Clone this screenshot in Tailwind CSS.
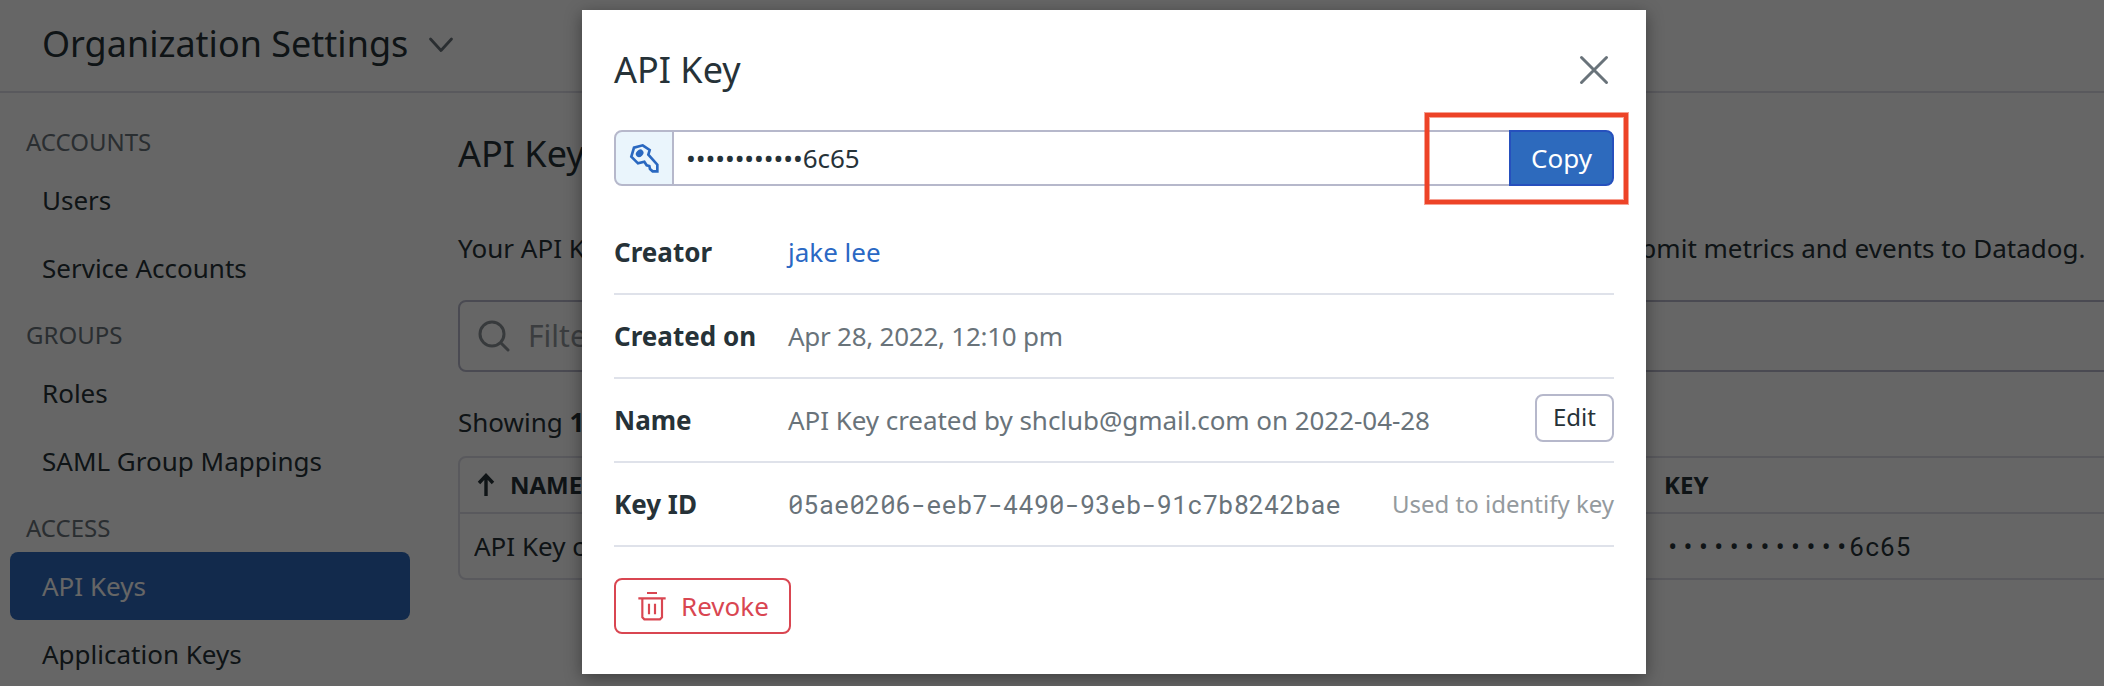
<!DOCTYPE html>
<html lang="en">
<head>
<meta charset="utf-8">
<title>API Keys</title>
<script src="https://cdn.jsdelivr.net/npm/@tailwindcss/browser@4"></script>
</head>
<body class="relative h-[686px] w-[2104px] overflow-hidden bg-white font-['Noto_Sans',sans-serif] text-[26px] leading-9 whitespace-nowrap text-[#263238]">
  <div class="flex h-full flex-col">
    <header class="flex h-[93px] shrink-0 items-center gap-5 border-b-2 border-[#dedfe9] pb-[3px] pl-[42px]">
      <h1 class="text-[36px]">Organization Settings</h1>
      <svg class="mt-[2px] h-[16px] w-[26px]" viewBox="0 0 26 16" fill="none" stroke="#69737a" stroke-width="2.8" stroke-linecap="round" stroke-linejoin="round"><path d="M2.500 2l10.500 11.500L23.500 2"/></svg>
    </header>
    <div class="flex flex-1">
      <nav class="w-[410px] shrink-0 pt-4 pl-[10px]">
        <div class="flex h-[57px] items-center pt-2 pl-4 text-2xl text-[#69737a]">ACCOUNTS</div>
        <a class="flex h-[68px] items-center pl-8">Users</a>
        <a class="flex h-[68px] items-center pl-8">Service Accounts</a>
        <div class="flex h-[57px] items-center pt-2 pl-4 text-2xl text-[#69737a]">GROUPS</div>
        <a class="flex h-[68px] items-center pl-8">Roles</a>
        <a class="flex h-[68px] items-center pl-8">SAML Group Mappings</a>
        <div class="flex h-[57px] items-center pt-2 pl-4 text-2xl text-[#69737a]">ACCESS</div>
        <a class="flex h-[68px] items-center rounded-lg bg-[#2d6abd] pl-8 text-white">API Keys</a>
        <a class="flex h-[68px] items-center pl-8">Application Keys</a>
      </nav>
      <main class="min-w-0 flex-1 pt-[37px] pl-12">
        <h2 class="text-[36px] leading-[48px]">API Keys</h2>
        <p class="mt-[52px] h-9 tracking-[0.012px]">Your API Keys are unique to your organization. An API key is required by the Datadog Agent to submit metrics and events to Datadog.</p>
        <div class="mt-[34px] flex h-[72px] w-[1700px] items-center gap-5 rounded-lg border-2 border-[#b8bacd] pl-[18px] text-[30px] text-[#949a9e]">
          <svg class="size-8" viewBox="0 0 32 32" fill="none" stroke="#8b9196" stroke-width="3" stroke-linecap="round"><circle cx="14" cy="14" r="12"/><path d="M23 23l7 7"/></svg>
          <span class="-ml-[2px]">Filter API Keys</span>
        </div>
        <p class="mt-[32px] h-9">Showing <b>1</b> of 1</p>
        <div class="mt-4 w-[1700px] rounded-lg border-2 border-[#dedfe9]">
          <div class="flex h-[56px] items-center border-b-2 border-[#dedfe9] pl-[17px] text-2xl font-bold">
            <svg class="mr-[15px] h-6 w-[18px]" viewBox="0 0 18 24" fill="none" stroke="#263238" stroke-width="3.400"><path d="M9 23V3M2 10l7-7.500L16 10"/></svg>
            <span class="w-[1154px]">NAME</span><span>KEY</span>
          </div>
          <div class="flex h-16 items-center pl-[14px]">
            <span class="w-[1191px] overflow-hidden">API Key created by shclub@gmail.com on 2022-04-28</span><span class="font-['Roboto_Mono','Liberation_Mono',monospace] text-[25.600px]">••••••••••••6c65</span>
          </div>
        </div>
      </main>
    </div>
  </div>

  <div class="absolute inset-0 bg-black/60"></div>

  <section class="absolute top-[10px] left-[582px] h-[664px] w-[1064px] bg-white px-8 shadow-[0_4px_16px_rgba(0,0,0,0.400)]">
    <div class="flex h-[120px] items-center justify-between pr-[5px]">
      <h2 class="text-[36px]">API Key</h2>
      <svg class="size-[30px]" viewBox="0 0 30 30" fill="none" stroke="#69737a" stroke-width="3" stroke-linecap="round"><path d="M2.500 2.500l25 25M27.500 2.500l-25 25"/></svg>
    </div>
    <div class="relative flex h-14">
      <div class="flex w-[60px] items-center justify-center rounded-l-lg border-2 border-[#b6b8cb] bg-[#eaf5fc]">
        <svg class="size-[30px]" viewBox="84 66 90 90" fill="none" stroke="#2a68c0" stroke-width="8" stroke-linejoin="miter"><path d="M125 73L146 87 142 101 169 131V151H155L147 144 145 135 137 133 130 122 111 127 91 107 99 80z"/><ellipse cx="116" cy="97" rx="12.500" ry="10" fill="#2a68c0" stroke="none" transform="rotate(-45 116 97)"/></svg>
      </div>
      <div class="flex flex-1 items-center border-y-2 border-[#b6b8cb] pl-3 tracking-[-0.050px]">••••••••••••6c65</div>
      <button class="w-[105px] rounded-r-lg border-2 border-[#2650bd] bg-[#2d6abd] text-white">Copy</button>
      <div class="absolute -top-[17px] -right-[14px] h-[91px] w-[203px] border-4 border-[#ed4327] shadow-[0_0_0_1px_rgba(237,67,39,0.500),inset_0_0_0_1px_rgba(237,67,39,0.500)]"></div>
    </div>
    <dl class="pt-[25px]">
      <div class="flex h-[84px] items-center border-b-2 border-[#dfe2ea]">
        <dt class="w-[174px] font-bold">Creator</dt><dd class="text-[#2a68c4]">jake lee</dd>
      </div>
      <div class="flex h-[84px] items-center border-b-2 border-[#dfe2ea]">
        <dt class="w-[174px] font-bold">Created on</dt><dd class="tracking-[-0.250px] text-[#69737a]">Apr 28, 2022, 12:10 pm</dd>
      </div>
      <div class="flex h-[84px] items-center border-b-2 border-[#dfe2ea]">
        <dt class="w-[174px] font-bold">Name</dt><dd class="flex-1 tracking-[-0.050px] text-[#69737a]">API Key created by shclub@gmail.com on 2022-04-28</dd>
        <button class="mb-1 h-12 w-[79px] rounded-lg border-2 border-[#b6b8cb] pb-[2px] text-2xl leading-9">Edit</button>
      </div>
      <div class="flex h-[84px] items-center border-b-2 border-[#dfe2ea]">
        <dt class="w-[174px] font-bold">Key ID</dt><dd class="flex-1 font-['Roboto_Mono','Liberation_Mono',monospace] text-[25.600px] text-[#69737a]">05ae0206-eeb7-4490-93eb-91c7b8242bae</dd>
        <dd class="text-2xl text-[#949a9e]">Used to identify key</dd>
      </div>
    </dl>
    <button class="mt-[31px] flex h-14 w-[177px] items-center gap-[14px] rounded-lg border-2 border-[#d94651] pl-[21px] text-[#d94651]">
      <svg class="size-[30px]" viewBox="111 61 90 90" fill="none" stroke="#d94651" stroke-width="6.500"><path d="M141 67H171M115 83H197M127 83V140L133 146H180L186 140V83M147 99V131M165 99V131"/></svg>
      <span>Revoke</span>
    </button>
  </section>
</body>
</html>
